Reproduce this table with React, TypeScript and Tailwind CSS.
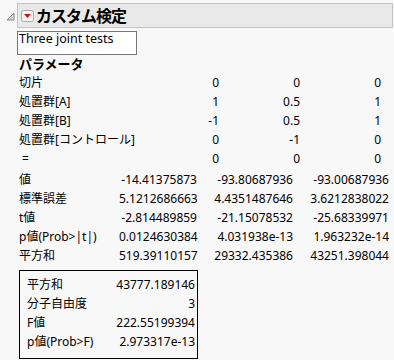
import React from 'react';

// --- Data ---
const contrastRows: [string, string, string, string][] = [
  ['切片', '0', '0', '0'],
  ['処置群[A]', '1', '0.5', '1'],
  ['処置群[B]', '-1', '0.5', '1'],
  ['処置群[コントロール]', '0', '-1', '0'],
  [' =', '0', '0', '0'],
];

const resultRows: [string, string, string, string][] = [
  ['値', '-14.41375873', '-93.80687936', '-93.00687936'],
  ['標準誤差', '5.1212686663', '4.4351487646', '3.6212838022'],
  ['t値', '-2.814489859', '-21.15078532', '-25.68339971'],
  ['p値(Prob>|t|)', '0.0124630384', '4.031938e-13', '1.963232e-14'],
  ['平方和', '519.39110157', '29332.435386', '43251.398044'],
];

const summaryRows: [string, string][] = [
  ['平方和', '43777.189146'],
  ['分子自由度', '3'],
  ['F値', '222.55199394'],
  ['p値(Prob>F)', '2.973317e-13'],
];

const DisclosureIcon = () => (
  <svg width="9" height="9" viewBox="0 0 9 9" className="shrink-0">
    <polygon points="8,1 8,8 1,8" fill="#d4d4d4" stroke="#8a8a8a" strokeWidth="1" />
  </svg>
);

const RedMenuButton = () => (
  <svg width="13" height="12" viewBox="0 0 13 12" className="shrink-0">
    <rect x="0.5" y="0.5" width="12" height="11" rx="2" fill="#f6f6f6" stroke="#a8a8a8" />
    <polygon points="3,4 10,4 6.5,8" fill="#d40f1a" />
  </svg>
);

const App: React.FC = () => {
  return (
    <div
      className="w-[394px] h-[360px] overflow-hidden bg-[#f8f8f8] text-black text-[12px]"
      style={{ fontFamily: '"Noto Sans", "Noto Sans CJK JP", sans-serif' }}
    >
      {/* Header */}
      <div className="flex items-center pt-[3px]">
        <div className="w-[17px] flex justify-end pr-[2px] pt-[2px]">
          <DisclosureIcon />
        </div>
        <div className="flex-1 mr-[1px] h-[25px] flex items-center gap-[2px] pl-[3px] bg-[#e9e9e9] border border-[#c2c2c2]">
          <RedMenuButton />
          <span className="text-[16px] font-bold tracking-[-1px] leading-none">カスタム検定</span>
        </div>
      </div>

      <div className="pl-[17px]">
        {/* Description box */}
        <div className="mt-[3px] w-[120px] h-[24px] border border-[#777] bg-white px-[1px] leading-[14px] text-[12.5px]">
          Three joint tests
        </div>

        <div className="pl-[2px]">
          <div className="h-[18px] leading-[18px] font-bold text-[13px]">パラメータ</div>

          {/* Contrast matrix */}
          <div className="grid grid-cols-[140px_60px_81px_81px] auto-rows-[19px] leading-[19px]">
            {contrastRows.map((r, i) => (
              <React.Fragment key={i}>
                <div className="whitespace-pre">{r[0]}</div>
                <div className="text-right">{r[1]}</div>
                <div className="text-right">{r[2]}</div>
                <div className="text-right">{r[3]}</div>
              </React.Fragment>
            ))}
          </div>

          {/* Estimates */}
          <div className="mt-[2px] grid grid-cols-[100px_78px_96px_96px] auto-rows-[19px] leading-[19px]">
            {resultRows.map((r, i) => (
              <React.Fragment key={i}>
                <div className="whitespace-nowrap">{r[0]}</div>
                <div className="text-right">{r[1]}</div>
                <div className="text-right">{r[2]}</div>
                <div className="text-right">{r[3]}</div>
              </React.Fragment>
            ))}
          </div>

          {/* Joint test summary */}
          <div className="mt-[5px] w-[179px] h-[89px] border border-black pl-[7px] pr-[2px] pt-[4px] grid grid-cols-[auto_1fr] auto-rows-[19px] leading-[19px] content-start">
            {summaryRows.map((r, i) => (
              <React.Fragment key={i}>
                <div className="whitespace-nowrap">{r[0]}</div>
                <div className="text-right">{r[1]}</div>
              </React.Fragment>
            ))}
          </div>
        </div>
      </div>
    </div>
  );
};

export default App;
